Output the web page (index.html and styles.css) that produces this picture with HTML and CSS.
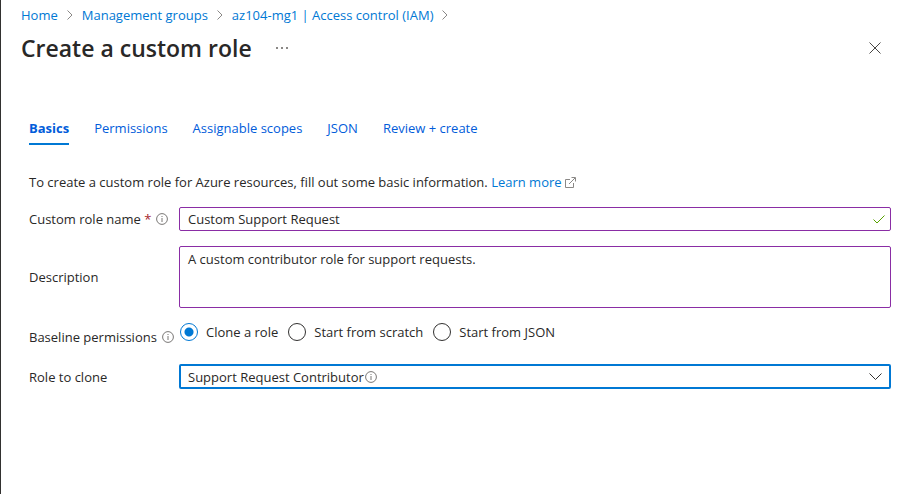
FILE: index.html
```html
<!DOCTYPE html>
<html lang="en">
<head>
<meta charset="utf-8">
<title>Create a custom role</title>
<link rel="stylesheet" href="styles.css">
</head>
<body>
<svg class="sprite" aria-hidden="true">
  <symbol id="chevron" viewBox="0 0 8 12"><path d="M1.5 1.5 6 6 1.5 10.5"/></symbol>
  <symbol id="info" viewBox="0 0 12 12"><circle cx="6" cy="6" r="5.4"/><path d="M6 5v4M6 3v1"/></symbol>
</svg>
<header class="header">
  <nav class="breadcrumb" aria-label="Breadcrumb">
    <a href="#">Home</a><svg class="chevron"><use href="#chevron"/></svg>
    <a href="#">Management groups</a><svg class="chevron"><use href="#chevron"/></svg>
    <a href="#">az104-mg1 | Access control (IAM)</a><svg class="chevron"><use href="#chevron"/></svg>
  </nav>
  <div class="title-bar">
    <h1>Create a custom role</h1>
    <button class="icon-button more" type="button" aria-label="More"><svg width="12" height="2" viewBox="0 0 12 2"><path d="M0 0h2v2H0zM5 0h2v2H5zM10 0h2v2h-2z"/></svg></button>
    <button class="icon-button close" type="button" aria-label="Close"><svg width="12" height="12" viewBox="0 0 12 12"><path d="M.5.5l11 11M11.5.5l-11 11"/></svg></button>
  </div>
</header>
<main class="content">
  <nav class="tabs" aria-label="Steps">
    <a class="active" href="#">Basics</a>
    <a href="#">Permissions</a>
    <a href="#">Assignable scopes</a>
    <a href="#">JSON</a>
    <a href="#">Review + create</a>
  </nav>
  <p class="intro">To create a custom role for Azure resources, fill out some basic information. <a href="#">Learn more <svg class="external" width="11" height="11" viewBox="0 0 11 11"><path d="M5 2.5H.5v8h8V6M4 7l6-6M6.5.5h4v4"/></svg></a></p>
  <form class="form">
    <div class="row">
      <div class="label"><label for="name">Custom role name <span class="required">*</span></label><svg class="info"><use href="#info"/></svg></div>
      <div class="field">
        <input class="box" id="name" type="text" value="Custom Support Request">
        <svg class="check" width="12" height="9" viewBox="0 0 12 9"><path d="M.5 4.5 4 8l7.5-7.5"/></svg>
      </div>
    </div>
    <div class="row">
      <div class="label"><label for="description">Description</label></div>
      <textarea class="box" id="description">A custom contributor role for support requests.</textarea>
    </div>
    <div class="row baseline" role="radiogroup" aria-labelledby="baseline">
      <div class="label"><span id="baseline">Baseline permissions</span><svg class="info"><use href="#info"/></svg></div>
      <div class="radios">
        <label><input type="radio" name="base" checked>Clone a role</label>
        <label><input type="radio" name="base">Start from scratch</label>
        <label><input type="radio" name="base">Start from JSON</label>
      </div>
    </div>
    <div class="row">
      <div class="label"><label for="role">Role to clone</label></div>
      <div class="field">
        <select class="box" id="role"><option>Support Request Contributor</option></select>
        <svg class="info role-info"><use href="#info"/></svg>
        <svg class="arrow" width="13" height="8" viewBox="0 0 13 8"><path d="M.5.5l6 6 6-6"/></svg>
      </div>
    </div>
  </form>
</main>
</body>
</html>
```
FILE: styles.css
```css
* { box-sizing: border-box; }
body {
  margin: 0;
  min-height: 100vh;
  border-left: 1px solid #323130;
  background: #fff;
  color: #292827;
  font: 13px/18px "Open Sans", "Noto Sans", sans-serif;
}
a { color: #0078d4; text-decoration: none; }
svg { fill: none; flex: none; }
.sprite { position: absolute; width: 0; height: 0; }
.header { padding: 6px 18px 0 20px; }
.breadcrumb { display: flex; align-items: center; }
.chevron { width: 8px; height: 12px; margin: 0 8px; stroke: #8a8886; }
.title-bar { display: flex; align-items: center; margin-top: 8px; }
h1 { margin: 0; font-size: 23px; line-height: 32px; font-weight: 600; }
.icon-button { display: flex; padding: 0; border: 0; background: none; }
.more { margin-left: 24px; }
.more path { fill: #8a8886; }
.close { margin-left: auto; padding: 10px; }
.close path { stroke: #484644; }
.content { padding: 55px 18px 0 28px; }
.tabs { display: flex; gap: 25px; }
.tabs a { padding-bottom: 6px; border-bottom: 2px solid transparent; color: #015cda; }
.tabs .active { border-color: #0078d4; font-weight: 700; }
.intro { margin: 28px 0 16px; }
.external { stroke: #8a8886; vertical-align: -1px; }
.form { display: grid; gap: 15px; }
.row { display: grid; grid-template-columns: 150px minmax(0, 1fr); align-items: center; }
.label { display: flex; align-items: center; gap: 5px; }
.required { color: #a4262c; }
.info { width: 12px; height: 12px; stroke: #797775; }
.field { position: relative; }
.box {
  display: block;
  width: 100%;
  height: 24px;
  margin: 0;
  padding: 0 8px;
  border: 1px solid #8a2da5;
  border-radius: 2px;
  outline: 0;
  background: #fff;
  color: inherit;
  font: inherit;
}
textarea.box { height: 62px; padding-top: 3px; resize: none; }
select.box { height: 25px; padding: 0 7px; border: 2px solid #0078d4; appearance: none; }
.check { position: absolute; right: 6px; top: 8px; stroke: #57a300; }
.arrow { position: absolute; right: 9px; top: 9px; stroke: #323130; pointer-events: none; }
.role-info { position: absolute; left: 186px; top: 7px; }
.baseline { align-items: end; padding-bottom: 3px; }
.radios { display: flex; gap: 10px; padding: 0 0 5px 1px; }
.radios label { display: flex; align-items: center; gap: 8px; }
input[type="radio"] {
  appearance: none;
  width: 18px;
  height: 18px;
  margin: 0;
  border: 1px solid #323130;
  border-radius: 50%;
}
input[type="radio"]:checked { border-color: #0078d4; background: radial-gradient(#0078d4 4px, #fff 5px); }
```
